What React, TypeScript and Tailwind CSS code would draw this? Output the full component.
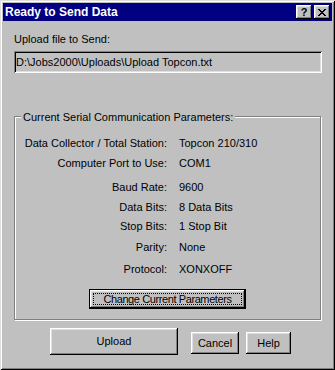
import React from 'react';

const FONT = { fontFamily: '"Liberation Sans", Arial, sans-serif' };

const ROWS = [
  { label: 'Data Collector / Total Station:', value: 'Topcon 210/310', mt: 'mt-[13px]' },
  { label: 'Computer Port to Use:', value: 'COM1', mt: 'mt-[7px]' },
  { label: 'Baud Rate:', value: '9600', mt: 'mt-[11px]' },
  { label: 'Data Bits:', value: '8 Data Bits', mt: 'mt-[7px]' },
  { label: 'Stop Bits:', value: '1 Stop Bit', mt: 'mt-[6px]' },
  { label: 'Parity:', value: 'None', mt: 'mt-[8px]' },
  { label: 'Protocol:', value: 'XONXOFF', mt: 'mt-[9px]' },
];

const RAISED =
  'shadow-[inset_-1px_-1px_#000,inset_1px_1px_#fff,inset_-2px_-2px_#808080,inset_2px_2px_#dfdfdf]';

const TitleButton: React.FC<{ children: React.ReactNode }> = ({ children }) => (
  <div
    className={`w-[16px] h-[14px] bg-[#c0c0c0] flex items-center justify-center ${RAISED}`}
  >
    {children}
  </div>
);

const Button: React.FC<{ label: string; className: string }> = ({ label, className }) => (
  <div
    className={`bg-[#c0c0c0] flex items-center justify-center text-[11px] leading-[13px] text-black ${RAISED} ${className}`}
  >
    {label}
  </div>
);

export default function App() {
  return (
    <div
      style={FONT}
      className="w-[335px] h-[370px] bg-[#c0c0c0] p-[3px] flex flex-col text-black shadow-[inset_1px_1px_#dfdfdf,inset_-1px_-1px_#000,inset_2px_2px_#fff,inset_-2px_-2px_#808080]"
    >
      {/* title bar */}
      <div className="h-[18px] bg-[#000080] flex items-center pl-[2px] pr-[2px]">
        <span className="text-white font-bold text-[12px] leading-[18px] flex-1">Ready to Send Data</span>
        <TitleButton>
          <span className="font-bold text-[11px] leading-[11px] text-black">?</span>
        </TitleButton>
        <div className="w-[2px]" />
        <TitleButton>
          <svg width="8" height="7" viewBox="0 0 8 7" shapeRendering="crispEdges">
            <path
              d="M0 0h2v1h-2zM6 0h2v1h-2zM1 1h2v1h-2zM5 1h2v1h-2zM2 2h4v1h-4zM3 3h2v1h-2zM2 4h4v1h-4zM1 5h2v1h-2zM5 5h2v1h-2zM0 6h2v1h-2zM6 6h2v1h-2z"
              fill="#000"
            />
          </svg>
        </TitleButton>
      </div>

      <div className="pl-[11px] flex flex-col">
        <div className="mt-[12px] text-[11px] leading-[13px]">Upload file to Send:</div>

        <div className="mt-[5px] w-[308px] h-[22px] bg-[#c0c0c0] p-[2px] flex items-center shadow-[inset_1px_1px_#808080,inset_-1px_-1px_#fff,inset_2px_2px_#000,inset_-2px_-2px_#dfdfdf]">
          <span className="text-[11px] leading-[13px]">D:\Jobs2000\Uploads\Upload Topcon.txt</span>
        </div>

        {/* group box */}
        <div className="mt-[43px] w-[307px] border border-[#808080] shadow-[inset_1px_1px_#fff,1px_1px_#fff] flex flex-col pb-[10px]">
          <span className="-mt-[6px] ml-[6px] self-start px-[2px] bg-[#c0c0c0] text-[11px] leading-[13px]">
            Current Serial Communication Parameters:
          </span>
          {ROWS.map((r) => (
            <div key={r.label} className={`${r.mt} h-[13px] flex text-[11px] leading-[13px]`}>
              <span className="w-[152px] text-right">{r.label}</span>
              <span className="ml-[12px]">{r.value}</span>
            </div>
          ))}
          <div className="mt-[13px] self-center w-[157px] h-[20px] border border-black bg-[#c0c0c0] flex">
            <div className={`flex-1 flex p-[3px] ${RAISED}`}>
              <div className="flex-1 border border-dotted border-black flex items-center justify-center text-[11px] leading-[13px] tracking-[-0.4px]">
                Change Current Parameters
              </div>
            </div>
          </div>
        </div>

        {/* bottom buttons */}
        <div className="mt-[8px] flex items-start">
          <Button label="Upload" className="ml-[36px] w-[128px] h-[27px]" />
          <Button label="Cancel" className="ml-[13px] mt-[4px] w-[48px] h-[22px]" />
          <Button label="Help" className="ml-[7px] mt-[4px] w-[45px] h-[22px]" />
        </div>
      </div>
    </div>
  );
}
